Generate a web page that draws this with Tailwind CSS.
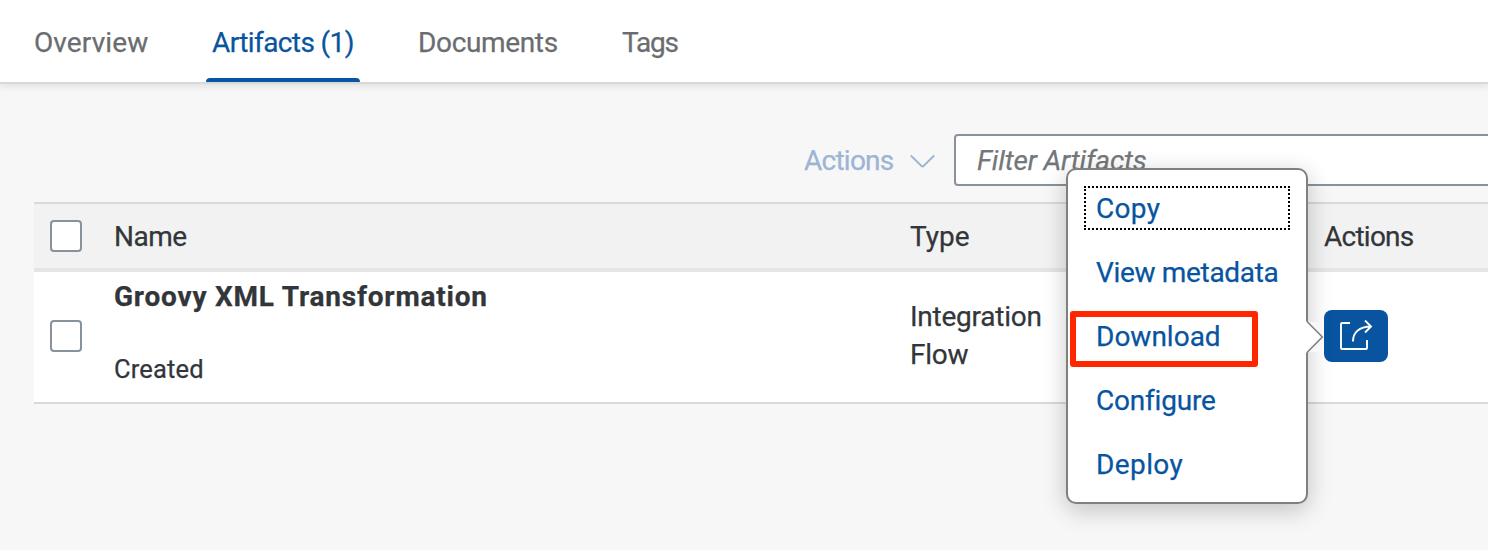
<!DOCTYPE html>
<html lang="en"><head><meta charset="utf-8"><title>Artifacts</title>
<script src="https://cdn.jsdelivr.net/npm/@tailwindcss/browser@4"></script></head>
<body class="h-[550px] w-[1488px] overflow-hidden bg-[#f7f7f7] font-['Roboto',sans-serif] text-[28px] leading-[38px] text-[#32363a] [-webkit-text-stroke:0.25px]">
<header class="relative flex h-[84px] border-b-2 border-[#d9d9d9] bg-white text-[#6a6d70] shadow-[0_2px_8px_rgba(0,0,0,0.1)]">
  <nav class="flex pl-[28px] pt-[24px] whitespace-nowrap">
    <a class="w-[178px] pl-[6px] tracking-[0.1px]">Overview</a>
    <a class="mr-[52px] w-[154px] pl-[6px] tracking-[-0.6px] text-[#0854a0]">Artifacts (1)</a>
    <a class="w-[204px] pl-[6px] tracking-[-0.35px]">Documents</a>
    <a class="pl-[6px] tracking-[-1.2px]">Tags</a>
  </nav>
  <span class="absolute bottom-0 left-[206px] h-[4px] w-[154px] rounded-t-[4px] bg-[#0854a0]"></span>
</header>
<main>
  <div class="flex whitespace-nowrap pl-[804px] pt-[50px]">
    <div class="flex w-[150px] shrink-0 pt-[8px] text-[#9cb4d5]"><span class="w-[106px] tracking-[-0.75px]">Actions</span>
      <svg class="mt-[12px] h-[16px] w-[25px]" viewBox="0 0 25 16" fill="none" stroke="currentColor" stroke-width="1.8"><path d="M.8 1.500L11.500 12Q12.500 13 13.500 12L24.200 1.500"/></svg>
    </div>
    <div class="h-[52px] w-[560px] shrink-0 rounded-[4px] border-2 border-[#89919a] bg-white pl-[21px] pt-[6px] italic tracking-[-0.15px] text-[#74777a]">Filter Artifacts</div>
  </div>
  <section class="ml-[34px] mt-[16px] whitespace-nowrap">
    <div class="flex h-[70px] border-b-4 border-t-2 border-b-[#e5e5e5] border-t-[#d9d9d9] bg-[#f2f2f2] pl-[16px] pt-[14px]">
      <div class="mt-[2px] h-8 w-8 rounded-[4px] border-2 border-[#89919a] bg-white"></div>
      <div class="w-[796px] pl-[32px] tracking-[-0.5px]">Name</div>
      <div class="ml-[32px] w-[414px]">Type</div>
      <div class="tracking-[-0.75px]">Actions</div>
    </div>
    <div class="flex h-[132px] border-b-2 border-[#d9d9d9] bg-white pl-[16px]">
      <div class="mt-[48px] h-8 w-8 rounded-[4px] border-2 border-[#89919a] bg-white"></div>
      <div class="w-[796px] pl-[32px] pt-[6px]"><div class="font-bold tracking-[0.78px]">Groovy XML Transformation</div><div class="mt-[34px] text-[25.5px] tracking-[0.15px]">Created</div></div>
      <div class="ml-[32px] w-[414px] pt-[26px] tracking-[-0.25px]"><div>Integration</div><div>Flow</div></div>
      <div class="pt-[38px]">
        <div class="h-[52px] w-[64px] rounded-[8px] bg-[#0854a0] text-white">
          <svg class="h-[52px] w-[64px]" viewBox="0 0 64 52" fill="none" stroke="currentColor" stroke-width="1.9"><path d="M26 13H18Q17 13 17 14V38Q17 39 18 39H42Q43 39 43 38V30"/><path d="M29 31.500C29 22.500 35 16.800 47 16.500M41 10.500L47 16.500L41 22.500"/></svg>
        </div>
      </div>
    </div>
  </section>
</main>
<div class="absolute left-[1066px] top-[168px] h-[336px] w-[242px] rounded-[10px] border-2 border-[#808080] bg-white p-[16px] text-[#0854a0] shadow-[0_6px_24px_rgba(0,0,0,0.22)]">
  <div class="mb-[20px] h-[44px] w-[206px] whitespace-nowrap border-2 border-dotted border-black pl-[10px] pt-[2px] tracking-[0.3px]">Copy</div>
  <div class="h-[64px] whitespace-nowrap pl-[12px] pt-[4px] tracking-[-0.33px]">View metadata</div>
  <div class="h-[64px] pl-[12px] pt-[4px]">Download</div>
  <div class="h-[64px] pl-[12px] pt-[4px] tracking-[-0.2px]">Configure</div>
  <div class="h-[64px] pl-[12px] pt-[4px] tracking-[0.4px]">Deploy</div>
  <svg class="absolute left-[238px] top-[150px] h-[34px] w-[18px]" viewBox="0 0 18 34"><rect x="2" y="2" width="14" height="30" fill="#f7f7f7"/><path d="M0 1.500H1L16 17L1 32.500H0Z" fill="#fff"/><path d="M1 1.500L16.300 17L1 32.500" fill="none" stroke="#808080" stroke-width="1.600"/></svg>
  <div class="absolute left-[2px] top-[141px] h-[56px] w-[188px] rounded-[3px] border-6 border-[#ff2600]"></div>
</div>
</body></html>
